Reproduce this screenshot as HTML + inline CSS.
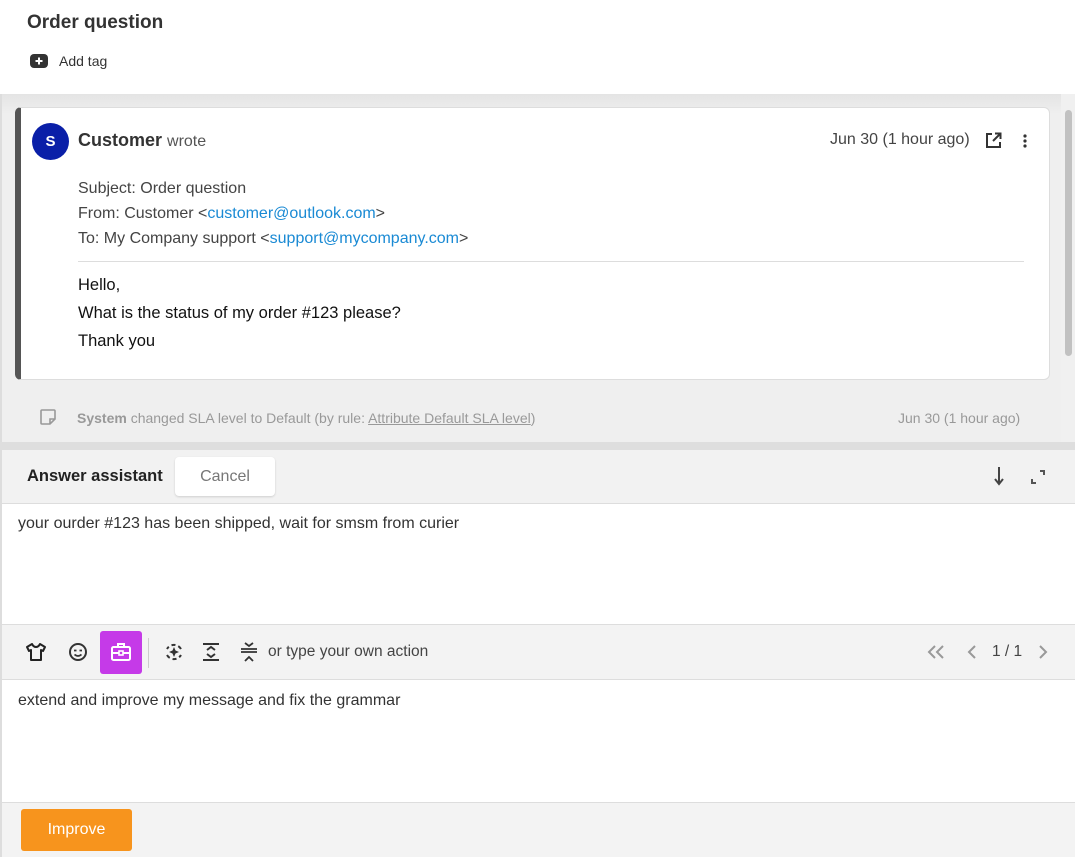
<!DOCTYPE html>
<html><head><meta charset="utf-8"><style>
*{box-sizing:border-box;margin:0;padding:0}
body{width:1075px;height:857px;overflow:hidden;font-family:"Liberation Sans",sans-serif;background:#fff;position:relative;color:#333}
.abs{position:absolute}
a{color:#1a8ad4;text-decoration:none}
</style></head><body>
<div class="abs" style="left:27px;top:12px;font-size:19px;font-weight:bold;color:#333">Order question</div>
<svg class="abs" style="left:29px;top:53px" width="20" height="16" viewBox="0 0 20 16"><rect x="1" y="1" width="18" height="14" rx="4" fill="#333"/><path d="M10 4.5v7M6.5 8h7" stroke="#fff" stroke-width="2"/></svg>
<div class="abs" style="left:59px;top:53px;font-size:14px;color:#333">Add tag</div>

<div class="abs" style="left:0;top:94px;width:1075px;height:348px;background:linear-gradient(#e4e4e4,#efefef 20px,#efefef);border-left:2px solid #ddd"></div>
<div class="abs" style="left:1061px;top:94px;width:14px;height:348px;background:#f0f0f0"></div>
<div class="abs" style="left:1065px;top:110px;width:7px;height:246px;background:#c1c1c1;border-radius:4px"></div>
<div class="abs" style="left:15px;top:107px;width:1035px;height:273px;background:#fff;border:1px solid #ddd;border-left:6px solid #555;border-radius:6px"></div>
<div class="abs" style="left:32px;top:123px;width:37px;height:37px;border-radius:50%;background:#0a1fa8;color:#fff;font-weight:bold;font-size:15px;text-align:center;line-height:37px">S</div>
<div class="abs" style="left:78px;top:130px;font-size:18px;font-weight:bold;color:#333">Customer <span style="font-weight:normal;font-size:16px;color:#555">wrote</span></div>
<div class="abs" style="left:830px;top:131px;font-size:16px;color:#444">Jun 30 (1 hour ago)</div>
<svg class="abs" style="left:985px;top:132px" width="17" height="17" viewBox="0 0 17 17"><path d="M7 2H2v13h13v-5" fill="none" stroke="#333" stroke-width="2"/><path d="M10 1.5h5.5V7M15 2L8 9" fill="none" stroke="#333" stroke-width="2"/></svg>
<svg class="abs" style="left:1022px;top:133px" width="6" height="16"><circle cx="3" cy="3" r="1.6" fill="#333"/><circle cx="3" cy="8" r="1.6" fill="#333"/><circle cx="3" cy="13" r="1.6" fill="#333"/></svg>
<div class="abs" style="left:78px;top:176px;font-size:16px;line-height:25px;color:#444">Subject: Order question<br>From: Customer &lt;<a>customer@outlook.com</a>&gt;<br>To: My Company support &lt;<a>support@mycompany.com</a>&gt;</div>
<div class="abs" style="left:78px;top:261px;width:946px;height:1px;background:#ddd"></div>
<div class="abs" style="left:78px;top:271px;font-size:16.5px;line-height:28px;color:#111">Hello,<br>What is the status of my order #123 please?<br>Thank you</div>
<svg class="abs" style="left:39px;top:408px" width="18" height="18" viewBox="0 0 18 18"><path d="M2 3a1 1 0 0 1 1-1h12a1 1 0 0 1 1 1v8l-5 5H3a1 1 0 0 1-1-1z M16 11h-5v5" fill="none" stroke="#999" stroke-width="1.6"/></svg>
<div class="abs" style="left:77px;top:410px;font-size:14px;color:#999"><b>System</b> changed SLA level to Default (by rule: <u>Attribute Default SLA level</u>)</div>
<div class="abs" style="left:898px;top:410px;font-size:14px;color:#999">Jun 30 (1 hour ago)</div>

<div class="abs" style="left:0;top:442px;width:1075px;height:8px;background:#dedede"></div>
<div class="abs" style="left:0;top:450px;width:1075px;height:53px;background:#f2f2f2;border-left:2px solid #ddd"></div>
<div class="abs" style="left:27px;top:467px;font-size:16.5px;font-weight:bold;color:#222">Answer assistant</div>
<div class="abs" style="left:175px;top:457px;width:100px;height:39px;background:#fff;border-radius:4px;box-shadow:0 1px 2px rgba(0,0,0,.15);text-align:center;line-height:39px;font-size:16px;color:#777">Cancel</div>
<svg class="abs" style="left:993px;top:466px" width="12" height="20"><path d="M6 1v16M2 13l4 5 4-5" fill="none" stroke="#444" stroke-width="2"/></svg>
<svg class="abs" style="left:1030px;top:469px" width="16" height="16"><path d="M10 2h4v4M2 10v4h4" fill="none" stroke="#555" stroke-width="2"/></svg>

<div class="abs" style="left:0;top:503px;width:1075px;height:121px;background:#fff;border-top:1px solid #ddd;border-left:2px solid #ddd"></div>
<div class="abs" style="left:18px;top:515px;font-size:16px;color:#333">your ourder #123 has been shipped, wait for smsm from curier</div>

<div class="abs" style="left:0;top:624px;width:1075px;height:56px;background:#f3f3f3;border-top:1px solid #ddd;border-bottom:1px solid #ddd;border-left:2px solid #ddd"></div>
<svg class="abs" style="left:25px;top:642px" width="22" height="20" viewBox="0 0 22 20"><path d="M7 2l-5 3 2 4 2-1v10h10V8l2 1 2-4-5-3c-1 2-2 3-4 3S8 4 7 2z" fill="none" stroke="#222" stroke-width="2" stroke-linejoin="round"/></svg>
<svg class="abs" style="left:68px;top:642px" width="20" height="20"><circle cx="10" cy="10" r="8" fill="none" stroke="#333" stroke-width="2"/><path d="M6 8.5h2.5M11.5 8.5h2.5M6.5 12.5q3.5 3 7 0" fill="none" stroke="#333" stroke-width="1.8"/></svg>
<div class="abs" style="left:100px;top:631px;width:42px;height:43px;background:#c53ae8;border-radius:3px"></div>
<svg class="abs" style="left:110px;top:642px" width="22" height="20"><rect x="2" y="5" width="18" height="13" rx="1.5" fill="none" stroke="#fff" stroke-width="2"/><path d="M8 5V2h6v3M2 11h18" stroke="#fff" stroke-width="2" fill="none"/><rect x="9" y="9" width="4" height="4" fill="#c53ae8" stroke="#fff" stroke-width="1.6"/></svg>
<div class="abs" style="left:148px;top:638px;width:1px;height:30px;background:#ccc"></div>
<svg class="abs" style="left:163px;top:642px" width="22" height="20"><path d="M4 13a8 8 0 0 0 14 0M18 7A8 8 0 0 0 4 7" fill="none" stroke="#333" stroke-width="2" stroke-dasharray="4 3"/><path d="M11 5l1.5 3.5L16 10l-3.5 1.5L11 15l-1.5-3.5L6 10l3.5-1.5z" fill="#333"/></svg>
<svg class="abs" style="left:202px;top:642px" width="18" height="20"><path d="M1 2h16M1 18h16M5 8l4-3 4 3M5 12l4 3 4-3" fill="none" stroke="#333" stroke-width="2"/></svg>
<svg class="abs" style="left:240px;top:642px" width="18" height="20"><path d="M1 10h16M1 7h16M5 1l4 3 4-3M5 19l4-4 4 4" fill="none" stroke="#333" stroke-width="1.8"/></svg>
<div class="abs" style="left:268px;top:643px;font-size:15.5px;color:#444">or type your own action</div>
<svg class="abs" style="left:927px;top:644px" width="18" height="16"><path d="M8 2L2 8l6 6M16 2l-6 6 6 6" fill="none" stroke="#999" stroke-width="2"/></svg>
<svg class="abs" style="left:967px;top:644px" width="10" height="16"><path d="M8 2L2 8l6 6" fill="none" stroke="#999" stroke-width="2"/></svg>
<div class="abs" style="left:992px;top:643px;font-size:15.5px;color:#444">1 / 1</div>
<svg class="abs" style="left:1038px;top:644px" width="10" height="16"><path d="M2 2l6 6-6 6" fill="none" stroke="#999" stroke-width="2"/></svg>

<div class="abs" style="left:0;top:680px;width:1075px;height:122px;background:#fff;border-left:2px solid #ddd"></div>
<div class="abs" style="left:18px;top:692px;font-size:16px;color:#333">extend and improve my message and fix the grammar</div>
<div class="abs" style="left:0;top:802px;width:1075px;height:55px;background:#f3f3f3;border-top:1px solid #ddd;border-left:2px solid #ddd"></div>
<div class="abs" style="left:21px;top:809px;width:111px;height:42px;background:#f7941d;border-radius:3px;color:#fff;text-align:center;line-height:42px;font-size:16px">Improve</div>
</body></html>
